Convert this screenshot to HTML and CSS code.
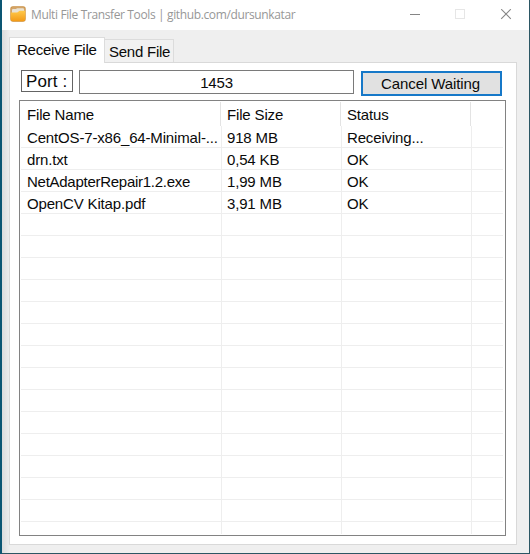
FILE: index.html
```html
<!DOCTYPE html>
<html lang="en">
<head>
<meta charset="utf-8">
<title>Multi File Transfer Tools</title>
<link rel="stylesheet" href="styles.css">
</head>
<body>
<div class="window">
  <header class="titlebar">
    <svg class="app-icon" width="16" height="16" viewBox="0 0 16 16">
      <defs>
        <linearGradient id="front" x1="0" y1="0" x2="0" y2="1"><stop offset="0" stop-color="#ffc94b"/><stop offset="1" stop-color="#f39a16"/></linearGradient>
      </defs>
      <rect x=".3" y=".3" width="15.4" height="15.4" rx="2.6" fill="#c98f42"/>
      <path d="M1 3Q1 1 3 1H13Q15 1 15 3V7H1Z" fill="#d3a467"/>
      <path d="M2 4Q2 3 3 3H6L7 2.3H13Q14 2.3 14 3.5V8H2Z" fill="#e9e2d4"/>
      <path d="M.7 6.6H6.5Q8 6.6 8.6 5.5Q9 4.8 10 4.8H15.3V13Q15.3 15.2 13 15.2H3Q.7 15.2 .7 13Z" fill="url(#front)"/>
    </svg>
    <h1 class="title">Multi File Transfer Tools | github.com/dursunkatar</h1>
    <svg class="controls" width="103" height="12" viewBox="0 0 103 12">
      <path d="M0 5.5H10" stroke="#858585"/>
      <rect x="45.5" y=".5" width="9" height="9" fill="none" stroke="#e6e6e6"/>
      <path d="M91.2 .2L100.8 9.8M100.8 .2L91.2 9.8" stroke="#858585" stroke-width="1.1"/>
    </svg>
  </header>
  <main class="client">
    <nav class="tabs">
      <div class="tab active">Receive File</div>
      <div class="tab">Send File</div>
    </nav>
    <section class="page">
      <div class="toolbar">
        <div class="port-label">Port :</div>
        <div class="port-input">1453</div>
        <button class="cancel">Cancel Waiting</button>
      </div>
      <div class="list">
        <div class="head"><div>File Name</div><div>File Size</div><div>Status</div></div>
        <div class="row"><div>CentOS-7-x86_64-Minimal-...</div><div>918 MB</div><div>Receiving...</div></div>
        <div class="row"><div>drn.txt</div><div>0,54 KB</div><div>OK</div></div>
        <div class="row"><div class="tight">NetAdapterRepair1.2.exe</div><div>1,99 MB</div><div>OK</div></div>
        <div class="row"><div>OpenCV Kitap.pdf</div><div>3,91 MB</div><div>OK</div></div>
        <div class="row"><div></div><div></div><div></div></div>
        <div class="row"><div></div><div></div><div></div></div>
        <div class="row"><div></div><div></div><div></div></div>
        <div class="row"><div></div><div></div><div></div></div>
        <div class="row"><div></div><div></div><div></div></div>
        <div class="row"><div></div><div></div><div></div></div>
        <div class="row"><div></div><div></div><div></div></div>
        <div class="row"><div></div><div></div><div></div></div>
        <div class="row"><div></div><div></div><div></div></div>
        <div class="row"><div></div><div></div><div></div></div>
        <div class="row"><div></div><div></div><div></div></div>
        <div class="row"><div></div><div></div><div></div></div>
        <div class="row"><div></div><div></div><div></div></div>
        <div class="row"><div></div><div></div><div></div></div>
        <div class="row last"><div></div><div></div><div></div></div>
      </div>
    </section>
  </main>
</div>
</body>
</html>
```
FILE: styles.css
```css
* { box-sizing: border-box; }

body {
  margin: 0;
  width: 530px;
  height: 554px;
  overflow: hidden;
  background: linear-gradient(90deg, #0c5673 0 2px, #2b5664 2px);
  font-family: "Liberation Sans", Arial, sans-serif;
  font-size: 15px;
  letter-spacing: -.16px;
  color: #0a0a0a;
}

.window {
  width: 527px;
  height: 553px;
  margin-left: 2px;
  background: #efefef;
}

.titlebar {
  display: flex;
  align-items: flex-start;
  height: 30px;
  padding: 6px 16px 0 8px;
  background: #fff;
}

.app-icon { flex: none; }

.title {
  flex: 1;
  margin: 0 0 0 5px;
  font: 12px/17px "Open Sans", "Noto Sans", sans-serif;
  letter-spacing: -.37px;
  color: #979797;
  white-space: nowrap;
}

.controls { flex: none; margin-top: 3px; }

.client {
  height: 523px;
  padding: 7px 12px 0 7px;
  background: linear-gradient(90deg, #dcdcdc, #efefef 8px);
}

.tabs {
  display: flex;
  align-items: flex-end;
  height: 25px;
}

.tab {
  width: 69px;
  height: 23px;
  padding-left: 4px;
  border: 1px solid #dcdcdc;
  border-left: 0;
  border-bottom: 0;
  background: #f1f1f1;
  line-height: 24px;
  letter-spacing: -.24px;
  white-space: nowrap;
}

.tab.active {
  position: relative;
  width: 96px;
  height: 26px;
  margin-bottom: -1px;
  padding-left: 7px;
  border-left: 1px solid #dcdcdc;
  background: #fff;
}

.page {
  height: 483px;
  padding: 7px 10px 0 9px;
  border: 1px solid #d9d9d9;
  background: #fff;
}

.toolbar {
  display: flex;
  align-items: flex-start;
  height: 30px;
  padding-left: 2px;
}

.port-label {
  width: 52px;
  height: 22px;
  padding-left: 4px;
  border: 1px solid #646464;
  font-size: 17px;
  line-height: 21px;
  letter-spacing: .1px;
  white-space: nowrap;
}

.port-input {
  width: 275px;
  height: 24px;
  margin-left: 6px;
  border: 1px solid #7a7a7a;
  line-height: 24px;
  text-align: center;
}

.cancel {
  width: 141px;
  height: 25px;
  margin: 1px 0 0 7px;
  padding: 0 2px 0 0;
  border: 2px solid #1678c8;
  background: #e1e1e1;
  font: inherit;
  line-height: 22px;
  letter-spacing: -.1px;
  color: inherit;
}

.list {
  height: 436px;
  border: 1px solid #828282;
  overflow: hidden;
}

.head,
.row {
  display: grid;
  grid-template-columns: 202px 120px 130px;
  height: 22px;
  line-height: 23px;
  white-space: nowrap;
}

.head {
  grid-template-columns: 201px 120px 130px;
  grid-template-rows: 24px;
  height: 25px;
  padding-top: 1px;
  line-height: 25px;
}

.head > div { padding-left: 7px; border-right: 1px solid #e3e3e3; }
.head > div + div { padding-left: 6px; }

.row { margin: 0 2px 0 1px; grid-template-columns: 201px 120px 130px; border-bottom: 1px solid #eee; }
.row > div { padding-left: 6px; border-right: 1px solid #eee; }
.row > div + div { padding-left: 5px; }
.row > .tight { letter-spacing: -.27px; }
.row.last { height: 12px; border-bottom: 0; }
```
